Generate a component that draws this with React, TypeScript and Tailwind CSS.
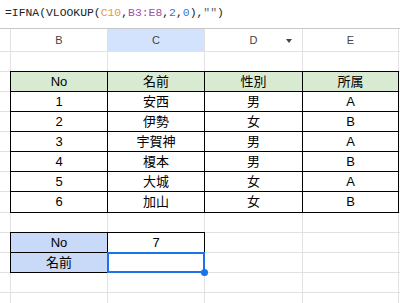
import React from "react";

const rows = [
  { no: "1", name: "安西", sex: "男", team: "A" },
  { no: "2", name: "伊勢", sex: "女", team: "B" },
  { no: "3", name: "宇賀神", sex: "男", team: "A" },
  { no: "4", name: "榎本", sex: "男", team: "B" },
  { no: "5", name: "大城", sex: "女", team: "A" },
  { no: "6", name: "加山", sex: "女", team: "B" },
];

const cell = "flex items-center justify-center";

export default function App() {
  return (
    <div
      className="w-[400px] h-[303px] overflow-hidden bg-white text-black"
      style={{ fontFamily: '"Liberation Sans", "Noto Sans CJK JP", sans-serif' }}
    >
      {/* formula bar */}
      <div className="h-[29px] border-b border-[#c7c7c7] flex items-center pl-[5px]">
        <span
          className="text-[11.4px] text-[#202124] whitespace-pre"
          style={{ fontFamily: '"Liberation Mono", monospace' }}
        >
          =IFNA(VLOOKUP(<span className="text-[#e59a44]">C10</span>,
          <span className="text-[#a04fa6]">B3:E8</span>,
          <span className="text-[#3f73c9]">2</span>,
          <span className="text-[#3f73c9]">0</span>),
          <span className="text-[#5f6368]">""</span>)
        </span>
      </div>

      {/* sheet grid */}
      <div className="h-[274px] grid grid-cols-[10px_96px_96px_97px_95px_1fr] grid-rows-[22px_19px_19px_19px_19px_19px_19px_19px_20px_19px_19px_19px_19px_1fr] gap-px bg-[#e1e1e1] text-[13px]">
        {/* column headers */}
        <div className="bg-white" />
        <div className={`${cell} bg-white text-[11px] text-[#444]`}>B</div>
        <div className={`${cell} bg-[#d3e3fd] text-[11px] text-[#444]`}>C</div>
        <div className={`${cell} bg-white relative text-[11px] text-[#444]`}>
          D
          <span className="absolute right-[10px] top-[10px] w-0 h-0 border-l-[3.5px] border-r-[3.5px] border-t-[4px] border-l-transparent border-r-transparent border-t-[#444]" />
        </div>
        <div className={`${cell} bg-white text-[11px] text-[#444]`}>E</div>
        <div className="bg-white" />

        {/* data table B2:E8 */}
        <div className="col-start-2 col-span-4 row-start-3 row-span-7 -m-px grid grid-cols-[96px_96px_97px_95px] grid-rows-[19px_19px_19px_19px_19px_19px_20px] gap-px bg-black p-px">
          {["No", "名前", "性別", "所属"].map((h) => (
            <div key={h} className={`${cell} bg-[#d9ead3]`}>
              {h}
            </div>
          ))}
          {rows.map((r) => (
            <React.Fragment key={r.no}>
              <div className={`${cell} bg-white`}>{r.no}</div>
              <div className={`${cell} bg-white`}>{r.name}</div>
              <div className={`${cell} bg-white`}>{r.sex}</div>
              <div className={`${cell} bg-white`}>{r.team}</div>
            </React.Fragment>
          ))}
        </div>

        {/* lookup B10:C11 */}
        <div className="col-start-2 col-span-2 row-start-11 row-span-2 -m-px grid grid-cols-[96px_96px] grid-rows-[19px_19px] gap-px bg-black p-px">
          <div className={`${cell} bg-[#c9daf8]`}>No</div>
          <div className={`${cell} bg-white`}>7</div>
          <div className={`${cell} bg-[#c9daf8]`}>名前</div>
          <div className={`${cell} bg-white relative`}>
            <div className="absolute -inset-px border-2 border-[#1a73e8] z-10" />
            <div className="absolute -right-[4px] -bottom-[4px] w-[7px] h-[7px] rounded-full bg-[#1a73e8] z-10" />
          </div>
        </div>

        {Array.from({ length: 46 }).map((_, i) => (
          <div key={i} className="bg-white" />
        ))}
      </div>
    </div>
  );
}
